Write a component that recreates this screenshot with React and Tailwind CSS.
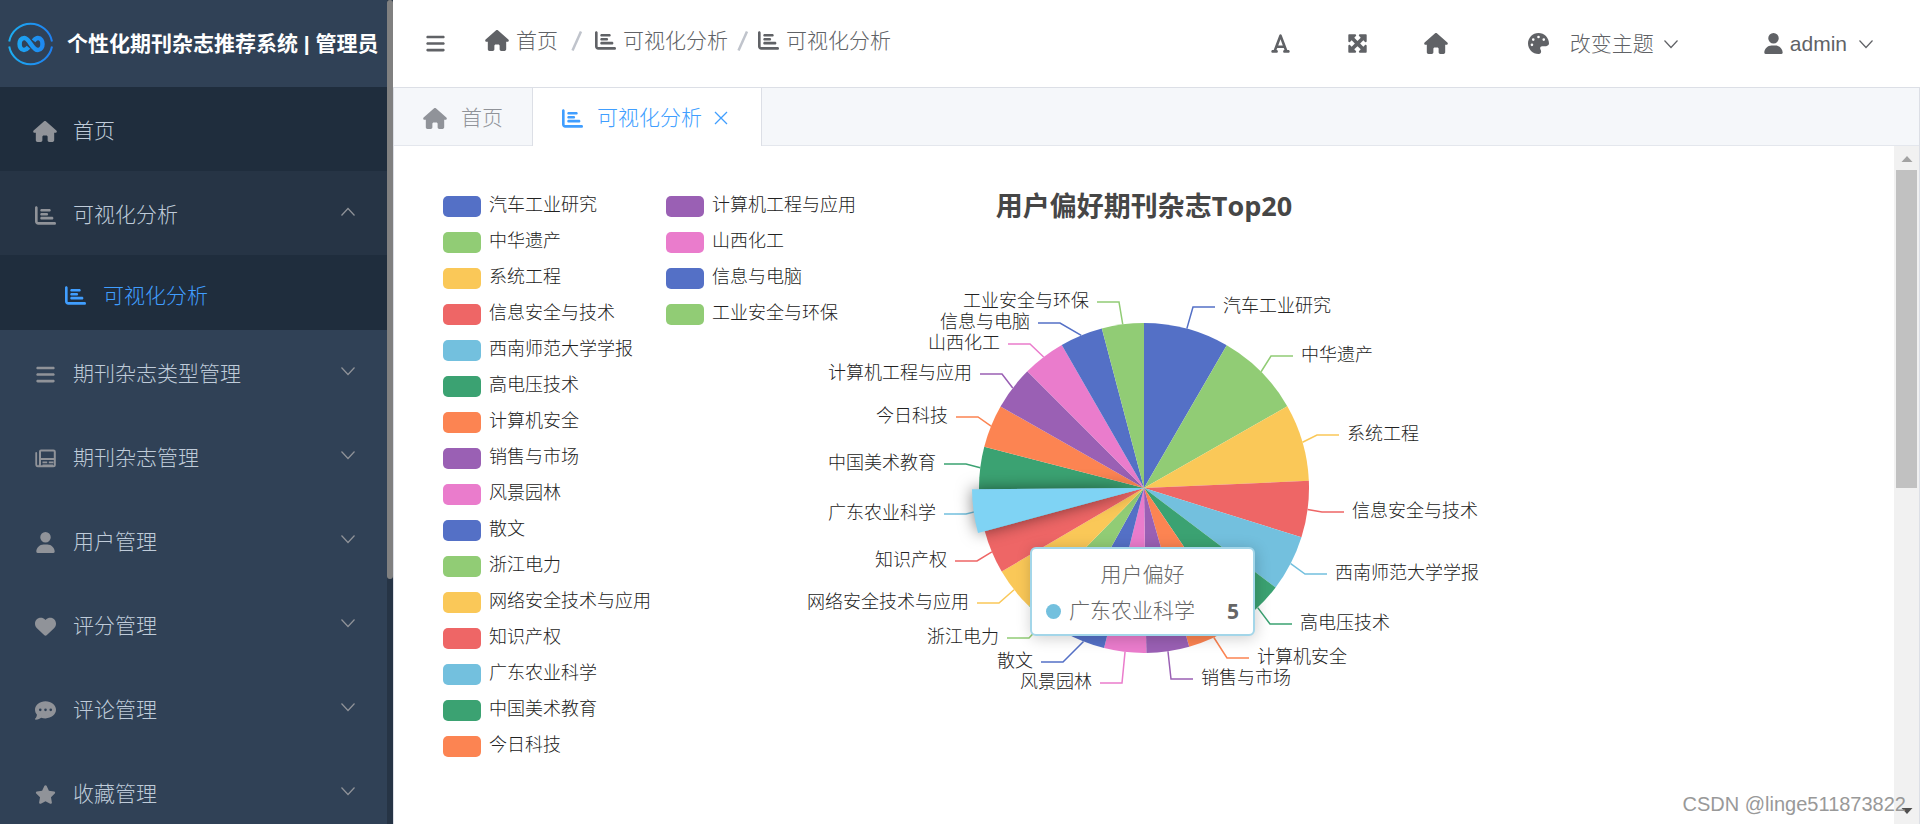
import React from "react";
import {
    FaBars,
    FaChartBar,
    FaCommentDots,
    FaFont,
    FaHeart,
    FaHouse,
    FaMaximize,
    FaPalette,
    FaStar,
    FaUser,
} from "react-icons/fa6";

const MENU = [
    { title: "期刊杂志类型管理", icon: FaBars },
    { title: "期刊杂志管理", icon: Newspaper },
    { title: "用户管理", icon: FaUser },
    { title: "评分管理", icon: FaHeart },
    { title: "评论管理", icon: FaCommentDots },
    { title: "收藏管理", icon: FaStar },
];

const COLORS = [
    "#5470c6",
    "#91cc75",
    "#fac858",
    "#ee6666",
    "#73c0de",
    "#3ba272",
    "#fc8452",
    "#9a60b4",
    "#ea7ccc",
];

const RADIUS = 165;
const ACTIVE = 13;

// to: end angle of the slice (degrees, clockwise from the top)
// x, y: elbow of the label line, measured from the pie centre
const SLICES = [
    { name: "汽车工业研究", to: 30.1, x: 49, y: -181 },
    { name: "中华遗产", to: 60.3, x: 127, y: -132 },
    { name: "系统工程", to: 87.5, x: 173, y: -53 },
    { name: "信息安全与技术", to: 107.4, x: 178, y: 24 },
    { name: "西南师范大学学报", to: 127.1, x: 161, y: 86 },
    { name: "高电压技术", to: 145.8, x: 126, y: 136 },
    { name: "计算机安全", to: 164.1, x: 83, y: 170 },
    { name: "销售与市场", to: 179.2, x: 27, y: 191 },
    { name: "风景园林", to: 194, x: -22, y: 195 },
    { name: "散文", to: 209, x: -81, y: 174 },
    { name: "浙江电力", to: 224.3, x: -115, y: 150 },
    { name: "网络安全技术与应用", to: 239.6, x: -145, y: 115 },
    { name: "知识产权", to: 254.8, x: -167, y: 73 },
    { name: "广东农业科学", to: 269.6, x: -178, y: 26 },
    { name: "中国美术教育", to: 284.5, x: -178, y: -24 },
    { name: "今日科技", to: 299.6, x: -166, y: -71 },
    { name: "计算机工程与应用", to: 315, x: -142, y: -114 },
    { name: "山西化工", to: 330.1, x: -114, y: -144 },
    { name: "信息与电脑", to: 345.2, x: -84, y: -165 },
    { name: "工业安全与环保", to: 360, x: -25, y: -186 },
].map((slice, i, all) => ({
    ...slice,
    from: i === 0 ? 0 : all[i - 1].to,
    color: COLORS[i % COLORS.length],
}));

const LEGEND_COLUMNS = [SLICES.slice(0, 16), SLICES.slice(16)];

function point(angle, r) {
    const rad = (angle * Math.PI) / 180;
    return [r * Math.sin(rad), -r * Math.cos(rad)];
}

function slicePath(from, to, r) {
    const [x1, y1] = point(from, r);
    const [x2, y2] = point(to, r);
    return `M0 0L${x1} ${y1}A${r} ${r} 0 0 1 ${x2} ${y2}Z`;
}

function Newspaper({ className }) {
    return (
        <svg className={className} viewBox="0 0 21 21" fill="none" stroke="currentColor" strokeWidth="2" aria-hidden="true">
            <path d="M5 4.5V3.5Q5 2.5 6 2.5H18.5Q19.8 2.5 19.8 3.8V16.8Q19.8 18.3 18.3 18.3H3.2Q5 18.3 5 16V4.5Z" />
            <path d="M1.2 5V16.3Q1.2 18.3 3 18.3" strokeLinecap="round" strokeWidth="1.8" />
            <path d="M5 11H20M7.5 14.4H12.2M13.8 14.4H18.5M7.5 17.4H18" strokeWidth="1.8" />
        </svg>
    );
}

function Chevron({ up }) {
    return (
        <svg width="16" height="10" viewBox="0 0 16 10" fill="none" stroke="currentColor" strokeWidth="1.2" aria-hidden="true">
            <path d={up ? "M1.5 8.5L8 1.5L14.5 8.5" : "M1.5 1.5L8 8.5L14.5 1.5"} />
        </svg>
    );
}

function Slash() {
    return (
        <svg width="12" height="20" viewBox="0 0 12 20" stroke="#c0c4cc" strokeWidth="2.5" aria-hidden="true">
            <path d="M1.5 19.5L10 .5" />
        </svg>
    );
}

function Logo() {
    return (
        <svg width="46" height="46" viewBox="0 0 46 46" fill="none" aria-hidden="true">
            <defs>
                <linearGradient id="logo" x1="0" y1="0" x2="46" y2="0" gradientUnits="userSpaceOnUse">
                    <stop offset="0" stopColor="#1cb0f2" />
                    <stop offset="1" stopColor="#1f7df0" />
                </linearGradient>
            </defs>
            <g stroke="url(#logo)">
                <path d="M1.2 20.5A21.8 21.8 0 0 1 44 20.5M1.2 25.5A21.8 21.8 0 0 0 44 25.5" strokeWidth="2" />
                <path
                    d="M20.5 26.2C18.5 28.6 17.2 29 16 29C13 29 11.6 26 11.6 23C11.6 20 13 17 16.4 17C21.5 17 24 29 30 29C33 29 34.5 26 34.5 23C34.5 20 33 17 30 17C28.3 17 27 18 25.6 19.8"
                    strokeWidth="4.5"
                />
            </g>
        </svg>
    );
}

function Sidebar() {
    return (
        <aside className="flex w-[393px] shrink-0 bg-[#263445]">
            <div className="flex min-w-0 flex-1 flex-col bg-[#304156] text-[21px] font-light text-[#bfcbd9]">
                <div className="flex h-[87px] shrink-0 items-center gap-[13px] pl-2 whitespace-nowrap text-white">
                    <Logo />
                    <h1 className="font-bold">个性化期刊杂志推荐系统 | 管理员</h1>
                </div>
                <nav className="flex flex-col">
                    <a href="#home" className="flex h-[84px] shrink-0 items-center bg-[#1f2d3d] pt-1 pl-[33px]">
                        <FaHouse className="mr-4 h-[21px] w-6 text-[#909399]" />
                        首页
                    </a>
                    <button className="flex h-[84px] shrink-0 items-center bg-[#263445] pt-1 pr-[31px] pl-[35px]">
                        <FaChartBar className="mr-[17px] size-[21px] text-[#909399]" />
                        <span>可视化分析</span>
                        <span className="ml-auto pb-[6px] text-[#909399]">
                            <Chevron up />
                        </span>
                    </button>
                    <a href="#analysis" className="flex h-[75px] shrink-0 items-center bg-[#1f2d3d] pt-[6px] pl-[65px] text-[#409eff]">
                        <FaChartBar className="mr-[17px] size-[21px]" />
                        可视化分析
                    </a>
                    {MENU.map(({ title, icon: Icon }) => (
                        <button key={title} className="flex h-[84px] shrink-0 items-center pt-1 pr-[31px] pl-[35px]">
                            <Icon className="mr-[17px] size-[21px] text-[#909399]" />
                            <span>{title}</span>
                            <span className="ml-auto pb-[6px] text-[#909399]">
                                <Chevron />
                            </span>
                        </button>
                    ))}
                </nav>
            </div>
            <div className="h-[579px] w-[6px] rounded bg-[#808080]" />
        </aside>
    );
}

function Header() {
    return (
        <header className="flex h-[87px] shrink-0 items-center pr-[46px] pl-8 text-[21px] font-light whitespace-nowrap text-[#606266]">
            <button aria-label="折叠菜单">
                <FaBars className="size-[21px]" />
            </button>
            <nav className="flex items-center pb-[6px] pl-[39px]">
                <a href="#home" className="flex items-center gap-[7px]">
                    <FaHouse className="h-[21px] w-6" />
                    首页
                </a>
                <span className="flex w-[37px] justify-center">
                    <Slash />
                </span>
                <a href="#analysis" className="flex items-center gap-[7px]">
                    <FaChartBar className="size-[21px]" />
                    可视化分析
                </a>
                <span className="flex w-[30px] justify-center">
                    <Slash />
                </span>
                <a href="#analysis" className="flex items-center gap-[7px]">
                    <FaChartBar className="size-[21px]" />
                    可视化分析
                </a>
            </nav>
            <div className="ml-auto flex items-center">
                <button aria-label="字体大小" className="mr-14">
                    <FaFont className="size-[21px]" />
                </button>
                <button aria-label="全屏" className="mr-14">
                    <FaMaximize className="size-[21px]" />
                </button>
                <button aria-label="返回首页" className="mr-20">
                    <FaHouse className="h-[21px] w-6" />
                </button>
                <button className="mr-[84px] flex items-center">
                    <FaPalette className="mr-[21px] size-[21px]" />
                    改变主题
                    <span className="ml-[9px]">
                        <Chevron />
                    </span>
                </button>
                <button className="flex items-center">
                    <FaUser className="mr-[6px] size-[21px]" />
                    admin
                    <span className="ml-[11px]">
                        <Chevron />
                    </span>
                </button>
            </div>
        </header>
    );
}

function Tabs() {
    return (
        <div className="flex h-[58px] shrink-0 border-b border-[#e4e7ed] bg-[#f5f7fa] text-[21px] font-light">
            <button className="flex items-center gap-[14px] px-[29px] pt-[3px] text-[#909399]">
                <FaHouse className="h-[21px] w-6" />
                首页
            </button>
            <div className="-mb-px flex items-center border-x border-[#dcdfe6] bg-white pt-[2px] pr-[33px] pl-[29px] text-[#409eff]">
                <button className="flex items-center gap-[14px]">
                    <FaChartBar className="size-[21px]" />
                    可视化分析
                </button>
                <button aria-label="关闭" className="ml-3">
                    <svg width="14" height="14" viewBox="0 0 14 14" stroke="currentColor" strokeWidth="1.3">
                        <path d="M1 1L13 13M13 1L1 13" />
                    </svg>
                </button>
            </div>
        </div>
    );
}

function Legend() {
    return (
        <div className="col-start-1 row-start-1 flex gap-[15px] justify-self-start pt-[42px] pl-[49px]">
            {LEGEND_COLUMNS.map((items, i) => (
                <ul key={i}>
                    {items.map((item) => (
                        <li key={item.name} className="flex h-9 items-center gap-2 text-lg font-light text-[#222]">
                            <span className="h-[21px] w-[38px] rounded-[5px]" style={{ backgroundColor: item.color }} />
                            <span className="pb-[2px]">{item.name}</span>
                        </li>
                    ))}
                </ul>
            ))}
        </div>
    );
}

function PieChart() {
    const active = SLICES[ACTIVE];

    return (
        <figure className="col-start-1 row-start-1 flex flex-col items-center justify-self-center pt-10">
            <figcaption className="font-['Open_Sans','Noto_Sans_CJK_SC',sans-serif] text-[27px] leading-10 font-bold text-[#464646]">
                用户偏好期刊杂志Top20
            </figcaption>
            <div className="relative mt-[62px]">
                <svg width="680" height="410" viewBox="-340 -200 680 410" role="img" aria-label="用户偏好期刊杂志Top20">
                    {SLICES.map((s) => {
                        const side = s.x > 0 ? 1 : -1;
                        const [x, y] = point((s.from + s.to) / 2, RADIUS);
                        return (
                            <g key={s.name}>
                                <path d={slicePath(s.from, s.to, RADIUS)} fill={s.color} />
                                <path
                                    d={`M${x} ${y}L${s.x} ${s.y}H${s.x + side * 22}`}
                                    fill="none"
                                    stroke={s.color}
                                    strokeWidth="1.5"
                                />
                                <text
                                    x={s.x + side * 30}
                                    y={s.y + 5}
                                    textAnchor={side > 0 ? "start" : "end"}
                                    className="fill-[#222] text-lg font-light"
                                >
                                    {s.name}
                                </text>
                            </g>
                        );
                    })}
                    {/* hovered slice */}
                    <path
                        d={slicePath(active.from, active.to, RADIUS + 7)}
                        fill="#7fd3f4"
                        className="drop-shadow-[0_0_8px_rgba(0,0,0,0.5)]"
                    />
                </svg>
                <div className="absolute top-[259px] left-[226px] h-[89px] w-[225px] rounded-md border-2 border-[#a3d6e9] bg-white px-[14px] pt-2 text-[21px] leading-9 font-light text-[#666] shadow-[1px_2px_15px_rgba(0,0,0,0.2)]">
                    <div className="text-center">用户偏好</div>
                    <div className="flex items-center">
                        <span className="mr-2 size-[15px] rounded-full bg-[#73c0de]" />
                        广东农业科学
                        <span className="ml-auto font-['Open_Sans',sans-serif] font-bold">5</span>
                    </div>
                </div>
            </div>
        </figure>
    );
}

function Scrollbar() {
    return (
        <div className="flex w-[25px] shrink-0 flex-col items-center justify-between bg-[#f1f1f1]">
            <div className="flex w-[21px] flex-col items-center">
                <svg width="12" height="24" viewBox="0 0 12 24" fill="#a3a3a3">
                    <path d="M6 10L11.5 16H.5Z" />
                </svg>
                <div className="h-[318px] w-full bg-[#c1c1c1]" />
            </div>
            <svg width="12" height="24" viewBox="0 0 12 24" fill="#505050">
                <path d="M.5 8H11.5L6 14Z" />
            </svg>
        </div>
    );
}

export default function App() {
    return (
        <div className="flex h-screen overflow-hidden bg-white font-['Liberation_Sans','Noto_Sans_CJK_SC',sans-serif]">
            <Sidebar />
            <div className="flex min-w-0 flex-1 flex-col">
                <Header />
                <main className="flex min-h-0 flex-1 flex-col border border-b-0 border-[#dcdfe6]">
                    <Tabs />
                    <div className="flex min-h-0 flex-1">
                        <div className="grid min-w-0 flex-1 content-start overflow-hidden whitespace-nowrap">
                            <Legend />
                            <PieChart />
                        </div>
                        <Scrollbar />
                    </div>
                </main>
            </div>
            <div className="absolute right-[14px] bottom-2 text-xl leading-6 font-light text-[#999]">
                CSDN @linge511873822
            </div>
        </div>
    );
}
